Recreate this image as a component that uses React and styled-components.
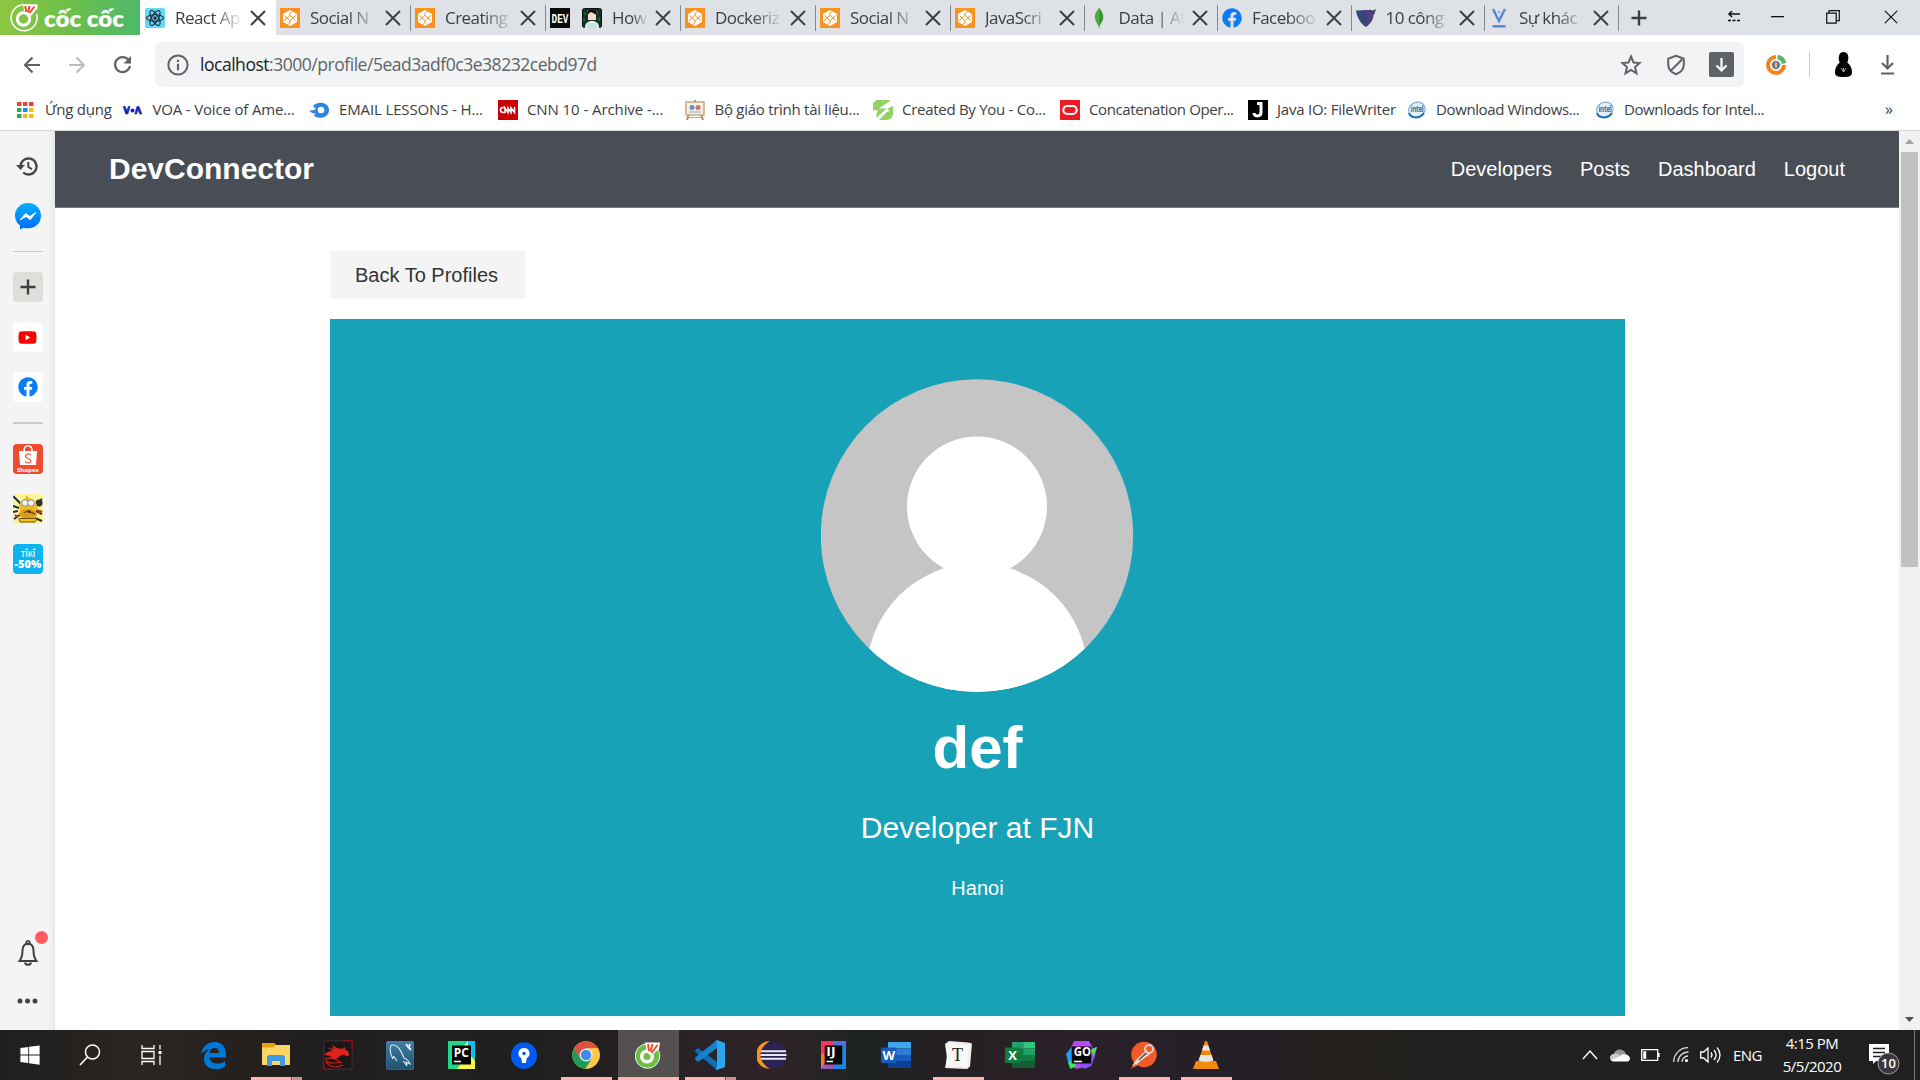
import React from "react";
import styled, { createGlobalStyle } from "styled-components";
import { FaWindows, FaYoutube, FaFacebook } from "react-icons/fa";

const UI = `"Segoe UI", "Open Sans", "Noto Sans", sans-serif`;
const ARIAL = `Arial, "Liberation Sans", sans-serif`;

const Global = createGlobalStyle`
  * { box-sizing: border-box; }
  html, body { margin: 0; padding: 0; }
  body { width: 1920px; height: 1080px; overflow: hidden; background: #fff; }
  svg { display: block; flex: none; }
`;

const Screen = styled.div`
  width: 1920px;
  height: 1080px;
  display: flex;
  flex-direction: column;
  overflow: hidden;
  font-family: ${UI};
`;

/* ---------- tab strip ---------- */
const TabStrip = styled.div`
  height: 35px;
  flex: none;
  display: flex;
  background: #dee1e6;
`;
const Brand = styled.div`
  width: 140px;
  flex: none;
  background: linear-gradient(90deg, #8dc63f, #6dbf4b 50%, #4cb96b);
`;
const Tab = styled.div`
  width: ${(p) => p.$w}px;
  flex: none;
  display: flex;
  align-items: center;
  padding-left: ${(p) => (p.$active ? 5 : 4)}px;
  background: ${(p) => (p.$active ? "#fff" : "transparent")};
`;
const TabTitle = styled.div`
  flex: 1;
  min-width: 0;
  margin-left: 10px;
  white-space: nowrap;
  font-size: 17px;
  line-height: 26px;
  letter-spacing: -0.55px;
  color: #3c4043;
  -webkit-mask-image: linear-gradient(90deg, #000 55%, transparent 100%);
  mask-image: linear-gradient(90deg, #000 55%, transparent 100%);
`;
const TabClose = styled.div`
  margin: 0 9px 0 7px;
`;
const TabLine = styled.div`
  width: 1px;
  height: 26px;
  background: ${(p) => (p.$hide ? "transparent" : "#85888d")};
`;
const NewTab = styled.div`
  width: 40px;
  display: flex;
  align-items: center;
  justify-content: center;
`;
const WindowButtons = styled.div`
  margin-left: auto;
  display: flex;
  align-items: center;
  padding-right: 22px;
`;
const WinBtn = styled.div`
  width: ${(p) => p.$w}px;
  display: flex;
  justify-content: flex-end;
  padding-bottom: 2px;
`;

/* ---------- toolbar ---------- */
const Toolbar = styled.div`
  height: 52px;
  flex: none;
  display: flex;
  align-items: center;
  padding: 7px 0 0 9px;
`;
const NavBtn = styled.div`
  width: 45px;
  display: flex;
  justify-content: center;
`;
const AddressBar = styled.div`
  width: 1589px;
  height: 45px;
  margin-left: 11px;
  display: flex;
  align-items: center;
  padding: 0 10px 0 12px;
  border-radius: 6px;
  background: #f1f3f4;
`;
const Url = styled.div`
  margin: -1px 0 0 11px;
  font-size: 17.5px;
  letter-spacing: -0.47px;
  color: #5f6368;
  white-space: nowrap;
  b { font-weight: 400; color: #202124; }
`;
const AddressIcons = styled.div`
  margin-left: auto;
  display: flex;
  align-items: center;
  gap: 22px;
  & > :first-child { margin-right: 1px; }
`;
const Extensions = styled.div`
  flex: 1;
  display: flex;
  align-items: center;
  padding-left: 21px;
`;
const ToolbarLine = styled.div`
  width: 1px;
  height: 25px;
  margin: 0 25px 0 22px;
  background: #c9cbce;
`;
const ToolbarGap = styled.div`
  width: 28px;
`;
const DownloadBox = styled.div`
  width: 25px;
  height: 25px;
  display: grid;
  place-items: center;
  border-radius: 2px;
  background: #5f6368;
`;

/* ---------- bookmarks ---------- */
const Bookmarks = styled.div`
  height: 44px;
  flex: none;
  display: flex;
  align-items: center;
  padding: 2px 0 0 15px;
  border-bottom: 1px solid #d5d7da;
`;
const Bookmark = styled.div`
  width: ${(p) => p.$w}px;
  flex: none;
  display: flex;
  align-items: center;
  gap: ${(p) => p.$gap}px;
  font-size: 15px;
  letter-spacing: ${(p) => p.$ls}px;
  color: #3c4043;
  white-space: nowrap;
`;
const MarkTitle = styled.span`
  padding-bottom: 2px;
`;
const MoreMarks = styled.div`
  margin-left: auto;
  padding: 0 27px 2px 0;
  font-size: 16px;
  color: #3c4043;
`;

/* ---------- body ---------- */
const Body = styled.div`
  height: 899px;
  flex: none;
  display: flex;
`;
const Sidebar = styled.div`
  width: 55px;
  flex: none;
  display: flex;
  flex-direction: column;
  align-items: center;
  padding: 20px 0 26px;
  background: linear-gradient(90deg, #f4f4f4 47px, #f0f0f0 52px, #e4e4e4 55px);
`;
const SideItem = styled.div`
  width: 30px;
  height: 30px;
  flex: none;
  display: grid;
  place-items: center;
  margin-bottom: 20px;
  border-radius: 4px;
  overflow: hidden;
  background: ${(p) => p.$bg || "transparent"};
`;
const SideLine = styled.div`
  width: 30px;
  height: ${(p) => p.$h}px;
  flex: none;
  margin-bottom: 20px;
  background: #cdcdcd;
`;
const SideBottom = styled.div`
  margin-top: auto;
  display: flex;
  flex-direction: column;
  align-items: center;
  gap: 32px;
`;
const BellWrap = styled.div`
  position: relative;
`;
const BellDot = styled.div`
  position: absolute;
  right: -10px;
  top: -9px;
  width: 13px;
  height: 13px;
  border-radius: 50%;
  background: #ff5a5f;
`;
const Page = styled.div`
  flex: 1;
  display: flex;
  flex-direction: column;
  font-family: ${ARIAL};
  background: #fff;
`;
const SiteNav = styled.div`
  height: 77px;
  flex: none;
  display: flex;
  align-items: center;
  justify-content: space-between;
  padding: 0 54px 1px;
  background: #494d55;
  border-bottom: 1px solid #17a2b8;
  color: #fff;
`;
const SiteName = styled.div`
  font-size: 30px;
  font-weight: 700;
`;
const SiteLinks = styled.div`
  display: flex;
  gap: 28px;
  padding-top: 2px;
  font-size: 20px;
`;
const Content = styled.div`
  width: 1295px;
  margin-left: 275px;
  padding-top: 43px;
`;
const BackButton = styled.div`
  display: inline-flex;
  align-items: center;
  height: 48px;
  width: 195px;
  padding: 0 0 0 25px;
  font-size: 20px;
  white-space: nowrap;
  color: #333;
  background: #f4f4f4;
`;
const ProfileCard = styled.div`
  height: 697px;
  margin-top: 20px;
  padding-top: 60px;
  display: flex;
  flex-direction: column;
  align-items: center;
  background: #18a2b8;
  color: #fff;
`;
const Name = styled.div`
  margin-top: 20px;
  font-size: 60px;
  line-height: 72px;
  font-weight: 700;
`;
const Role = styled.div`
  margin-top: 26px;
  font-size: 30px;
  line-height: 36px;
`;
const Place = styled.div`
  margin-top: 27px;
  font-size: 20px;
  line-height: 30px;
`;
const Scrollbar = styled.div`
  width: 21px;
  flex: none;
  display: flex;
  flex-direction: column;
  align-items: center;
  background: #f1f1f1;
`;
const ScrollArrow = styled.div`
  height: 21px;
  display: flex;
  align-items: center;
`;
const ScrollThumb = styled.div`
  width: 17px;
  height: 415px;
  margin-bottom: auto;
  background: #c1c1c1;
`;

/* ---------- taskbar ---------- */
const Taskbar = styled.div`
  height: 50px;
  flex: none;
  display: flex;
  background: linear-gradient(90deg, #1f1f1f 0, #2b2520 150px, #211e1e 300px, #201f1f 540px, #2a2226 700px, #2d2328 780px, #1f2323 860px, #262023 960px, #2a2128 1080px, #251f28 1240px, #25221e 1340px, #212020 1480px, #212020 100%);
`;
const TaskCell = styled.div`
  width: ${(p) => p.$w || 61}px;
  flex: none;
  display: flex;
  flex-direction: column;
  align-items: center;
  justify-content: flex-end;
  margin-right: ${(p) => (p.$w ? 0 : 1)}px;
  background: ${(p) => (p.$active ? "#53504f" : "transparent")};
`;
const TaskIcon = styled.div`
  height: 47px;
  display: grid;
  place-items: center;
  padding: 3px 2px 0 0;
`;
const Underline = styled.div`
  width: ${(p) => (p.$full ? 61 : 51)}px;
  height: 3px;
  background: ${(p) =>
    p.$kind === "none" ? "transparent" : p.$kind === "multi" ? "linear-gradient(90deg, #ffb3b3 40px, #6d5454 40px, #6d5454 41px, #d08f90 41px)" : "#ffb3b3"};
`;
const Tray = styled.div`
  margin-left: auto;
  display: flex;
  align-items: center;
  color: #fff;
  font-size: 15px;
`;
const TrayIcon = styled.div`
  margin-right: ${(p) => p.$gap}px;
`;
const Lang = styled.div`
  width: 30px;
  letter-spacing: -0.6px;
`;
const Clock = styled.div`
  width: 82px;
  margin-left: 8px;
  text-align: center;
  line-height: 23px;
  letter-spacing: -0.5px;
  white-space: nowrap;
`;
const Notice = styled.div`
  margin-left: 16px;
  padding-top: 7px;
`;
const DesktopEdge = styled.div`
  width: 6px;
  height: 50px;
  margin-left: 14px;
  border-left: 1px solid #77777a;
`;

/* ---------- drawings ---------- */
const T = ({ children, ...p }) => (
  <text textAnchor="middle" fontFamily="Open Sans, sans-serif" fontWeight="700" {...p}>{children}</text>
);

const CocCoc = () => (
  <svg width="140" height="35" viewBox="0 0 140 35">
    <path d="M23.500 4.800A13 13 0 1 0 36.500 14" fill="none" stroke="#fff" strokeWidth="1.500" />
    <circle cx="23.500" cy="19" r="6.200" fill="none" stroke="#fff" strokeWidth="3" />
    <path d="M23 4.200h14.500v4L31 16l-4.500-3.500L24 12z" fill="#fff" />
    <path d="M25.200 6l1.200 6M29.500 6l-1.300 6.500M34.500 6.500l-5 6.500" stroke="#ef4a2d" strokeWidth="2" />
    <text x="44" y="27" textLength="80" lengthAdjust="spacingAndGlyphs" fontFamily="Lato, Open Sans, sans-serif" fontWeight="800" fontSize="22" fill="#fff">cốc cốc</text>
  </svg>
);
const ReactIcon = () => (
  <svg width="20" height="20" viewBox="0 0 20 20">
    <rect width="20" height="20" rx="2" fill="#61dafb" />
    <g fill="none" stroke="#20232a" strokeWidth="1.100">
      <ellipse cx="10" cy="10" rx="8.500" ry="3.300" />
      <ellipse cx="10" cy="10" rx="8.500" ry="3.300" transform="rotate(60 10 10)" />
      <ellipse cx="10" cy="10" rx="8.500" ry="3.300" transform="rotate(120 10 10)" />
    </g>
    <circle cx="10" cy="10" r="1.700" fill="#20232a" />
  </svg>
);
const OrangeIcon = () => (
  <svg width="20" height="20" viewBox="0 0 20 20">
    <rect width="20" height="20" fill="#f7931e" />
    <path d="M10 2l7 4v8l-7 4-7-4V6z" fill="#fff" />
    <g fill="none" stroke="#f7931e" strokeWidth="1">
      <path d="M10 7.200l2.800 2.800-2.800 2.800L7.200 10z" />
      <path d="M7.200 10L4.500 7.500M10 7.200c-.5-2 .5-3 2.500-3.500M12.800 10l3.500-3M12.800 10l2.700 2.500M10 12.800c.5 2-.5 3-2.500 3.500M7.200 10l-3.500 3" />
    </g>
  </svg>
);
const DevIcon = () => (
  <svg width="52" height="20" viewBox="0 0 52 20">
    <rect width="20" height="20" fill="#0a0a0a" />
    <text x="1.500" y="14.500" textLength="17" lengthAdjust="spacingAndGlyphs" fontFamily="Liberation Mono, monospace" fontWeight="700" fontSize="12.500" fill="#fff">DEV</text>
    <rect x="32.500" y=".500" width="19" height="19" rx="2" fill="#153322" stroke="#0a140e" />
    <path d="M35 4v3M38 2v3M47 3v4M49 9v4M34 10v3" stroke="#3a7d4d" strokeWidth="1" />
    <path d="M38 7c0-6 8-6 8 0v5h-8z" fill="#f7dccb" />
    <path d="M37 7c0-7 10-7 10 0l-2-1-4-2-3 2z" fill="#111" />
    <path d="M35 20c0-5 3-7 7-7s7 2 7 7z" fill="#f4f7f8" />
    <rect x="37" y="15" width="10" height="5" fill="#c5e6da" />
  </svg>
);
const LeafIcon = () => (
  <svg width="20" height="20" viewBox="0 0 20 20">
    <path d="M10 0c5 6 6 10 .6 17.500L10.400 20h-.8l-.2-2.500C4 10 5 6 10 0z" fill="#4faa3f" />
    <path d="M10 0c5 6 6 10 .6 17.500L10 18z" fill="#3d9636" />
  </svg>
);
const FbIcon = ({ s = 20 }) => <FaFacebook size={s} color="#0b7cf5" />;
const FoxIcon = () => (
  <svg width="20" height="20" viewBox="0 0 20 20">
    <path d="M0 2.500L11 2c3 0 5 0 6 2 1 6-2 11-7 15C5 16 1 10 0 2.500z" fill="#36487a" />
    <path d="M8 2.200l5-.2c3 0 4 .5 4.500 2.500.7 5.500-2 10-6.500 13.500 1-5 0-11-3-15.800z" fill="#50417c" />
    <path d="M13 1l3 2 4-2-2 6z" fill="#3b3a6e" />
  </svg>
);
const ViblioIcon = () => (
  <svg width="20" height="20" viewBox="0 0 20 20">
    <path d="M4 1l6 12L16 1M3.500 18.200h13" fill="none" stroke="#5488d2" strokeWidth="2.400" />
    <circle cx="10" cy="4" r="1.600" fill="#8fb4e6" />
  </svg>
);
const CloseX = ({ s = 16, w = 2, c = "#3c4043" }) => (
  <svg width={s} height={s} viewBox="0 0 16 16"><path d="M1 1l14 14M15 1L1 15" stroke={c} strokeWidth={w} /></svg>
);
const BackArrow = ({ flip, c }) => (
  <svg width="16" height="18" viewBox="0 0 16 18">
    <path d={flip ? "M0 9h14M7.500 1.500L15 9l-7.500 7.500" : "M16 9H2M8.500 1.500L1 9l7.500 7.500"} fill="none" stroke={c} strokeWidth="2.200" />
  </svg>
);
const Reload = () => (
  <svg width="19" height="19" viewBox="-1 0 19 19">
    <path d="M15.500 5A7.500 7.500 0 1 0 17 11" fill="none" stroke="#5f6368" strokeWidth="2.300" />
    <path d="M18 1v7.500h-7.500z" fill="#5f6368" />
  </svg>
);
const Info = () => (
  <svg width="22" height="22" viewBox="0 0 22 22">
    <circle cx="11" cy="11" r="9.600" fill="none" stroke="#5f6368" strokeWidth="2" />
    <path d="M11 9.700v6.500M11 5.800v2.300" stroke="#5f6368" strokeWidth="2.200" />
  </svg>
);
const Star = () => (
  <svg width="22" height="22" viewBox="0 0 22 22">
    <path d="M11 2.500l2.500 6 6.200.5-4.700 4.100 1.500 6.200L11 16l-5.500 3.300L7 13.100 2.300 9l6.200-.5z" fill="none" stroke="#5f6368" strokeWidth="2" />
  </svg>
);
const Shield = () => (
  <svg width="22" height="22" viewBox="0 0 22 22">
    <path d="M11 1.800l7.800 3v6c0 4.500-3.200 7.700-7.800 9.500-4.600-1.800-7.800-5-7.800-9.500v-6zM5 17.500L17 5.500" fill="none" stroke="#5f6368" strokeWidth="2" />
  </svg>
);
const Down = ({ c, bar }) => (
  <svg width="15" height="20" viewBox="0 0 15 20">
    <path d={bar ? "M7.500 0v13M2 8l5.500 5.500L13 8M1 18.500h13" : "M7.500 3v12M2.500 10.500l5 5 5-5"} fill="none" stroke={c} strokeWidth="2.200" />
  </svg>
);
const Ring = () => (
  <svg width="22" height="22" viewBox="0 0 22 22">
    <path d="M11 3a8 8 0 1 0 8 8" fill="none" stroke="#f58220" strokeWidth="4" />
    <path d="M12.500 3a8 8 0 0 1 6.500 6.500" fill="none" stroke="#5cb560" strokeWidth="4.600" />
    <circle cx="11" cy="11" r="4.200" fill="#777" />
    <path d="M11 8.500v5" stroke="#ddd" strokeWidth="1.500" />
  </svg>
);
const Person = () => (
  <svg width="17" height="25" viewBox="0 0 17 25">
    <path d="M8.500 0C12 0 14 3 13.200 7.500 13 9 12.700 9.500 12.300 10.500 15 12.500 17 16 17 20c0 4-2 5-8.500 5S0 24 0 20c0-4 2-7.500 4.700-9.500C3.500 8 3.600 6 4 4 4.400 1.500 6 0 8.500 0z" fill="#050505" />
    <path d="M6 16l2.500 4 2.500-4M8.500 16v4" fill="none" stroke="#bbb" strokeWidth=".9" />
  </svg>
);
const Apps = () => (
  <svg width="20" height="20" viewBox="0 0 20 20">
    {[0, 1, 2].map((r) => [0, 1, 2].map((c) => (
      <rect key={r + "" + c} x={2 + c * 6} y={2 + r * 6} width="4.500" height="4" fill={[["#ea4335", "#ea4335", "#ea4335"], ["#34a853", "#1a86f0", "#fbb905"], ["#34a853", "#fbb905", "#fbb905"]][r][c]} />
    )))}
  </svg>
);
const Voa = () => (
  <svg width="21" height="20" viewBox="0 0 21 20">
    <path d="M1.200 6.500h2L5 11l1.300-4.500h1.800l-2.300 7.500H3.800zM12.800 14l2.200-7.500h2L19.800 14h-2L16 9.500 14.500 14z" fill="#1626b4" stroke="#1626b4" strokeWidth=".7" />
    <circle cx="10.500" cy="10.500" r="2" fill="#1626b4" />
  </svg>
);
const Mail = () => (
  <svg width="21" height="20" viewBox="0 0 21 20">
    <path d="M4 6C7 1 20 1 20 10c0 8-10 10-15.500 5.500L7 14C4 13.500 1.500 12.500 0 10.500 3 10.500 5 10 7 9z" fill="#2c85de" />
    <circle cx="12" cy="10" r="3.300" fill="#fff" />
  </svg>
);
const Cnn = () => (
  <svg width="20" height="20" viewBox="0 0 20 20">
    <rect width="20" height="20" fill="#cc0000" />
    <path d="M7 7.500H5a2 2 0 0 0 0 5h2V8l3 4.500V8l3 4.500V8l3.500 4.500V7" fill="none" stroke="#fff" strokeWidth="1.500" />
  </svg>
);
const Board = () => (
  <svg width="20" height="20" viewBox="0 0 20 20">
    <path d="M4 14l-2 6M16 14l2 6M10 0v2" stroke="#b28a5b" strokeWidth="2" />
    <rect x="1" y="2" width="18" height="13" fill="#f5f0e8" stroke="#c9a77e" strokeWidth="1.500" />
    <circle cx="7" cy="7.500" r="2.500" fill="#6a8fc8" /><circle cx="13" cy="7.500" r="2.500" fill="#d66e78" />
    <path d="M4 12h12" stroke="#9aa5b8" />
    <path d="M4 17.500h12" stroke="#c9a77e" />
  </svg>
);
const Sgreen = () => (
  <svg width="20" height="20" viewBox="0 0 20 20">
    <path d="M0 3.500L4.500 0H20v1L7 9.500h9L4 20v-5l2-3.500H0z" fill="#93d162" transform="scale(.85 .9)" />
    <path d="M20 6v7c0 4-2 7-7 7H6l8-8 3-1-3-2z" fill="#93d162" />
  </svg>
);
const Oracle = () => (
  <svg width="20" height="20" viewBox="0 0 20 20">
    <rect width="20" height="20" fill="#ec1c24" /><rect x="3.300" y="6" width="13.400" height="8" rx="4" fill="none" stroke="#fff" strokeWidth="2" />
  </svg>
);
const JIcon = () => (
  <svg width="20" height="20" viewBox="0 0 20 20">
    <rect width="20" height="20" fill="#000" />
    <path d="M9 3.500h5.500M13 3v9.500c0 4.500-7 4.500-7 .5" fill="none" stroke="#fff" strokeWidth="3" />
  </svg>
);
const Intel = () => (
  <svg width="20" height="20" viewBox="0 0 20 20">
    <ellipse cx="10" cy="9.500" rx="8.500" ry="7.200" fill="#e3f0f8" stroke="#7cb6dc" strokeWidth="1.200" transform="rotate(-25 10 10)" />
    <path d="M2 13c2 6 11 6 15 0" fill="none" stroke="#1d6fb0" strokeWidth="2" />
    <text x="3.500" y="12" textLength="13" lengthAdjust="spacingAndGlyphs" fontFamily="Open Sans, sans-serif" fontWeight="700" fontSize="8" fill="#2676b5">intel</text>
  </svg>
);
const History = () => (
  <svg width="23" height="22" viewBox="0 0 23 22">
    <path d="M4.500 11.500a8 8 0 1 1 2.700 6" fill="none" stroke="#454545" strokeWidth="2.300" />
    <path d="M0 10h9l-4.500 5z" fill="#454545" />
    <path d="M12.300 7v5l3.700 2.200" fill="none" stroke="#454545" strokeWidth="2" />
  </svg>
);
const Messenger = () => (
  <svg width="26" height="27" viewBox="0 0 26 27">
    <defs><linearGradient id="ms" x1="0" y1="0" x2="0" y2="1"><stop offset="0" stopColor="#00b2ff" /><stop offset="1" stopColor="#006aff" /></linearGradient></defs>
    <path d="M13 0c7.300 0 13 5.500 13 12.700S20.300 25.300 13 25.300c-1.500 0-3-.2-4.300-.6L5 26.500v-4C2 20.200 0 16.800 0 12.700 0 5.500 5.700 0 13 0z" fill="url(#ms)" />
    <path d="M5.200 16.800l5.600-6.300 4 3 6-3.900-5.500 6.900-4.200-3.100z" fill="#fff" stroke="#fff" />
  </svg>
);
const Plus = ({ s = 16, w = 2.4 }) => (
  <svg width={s} height={s} viewBox="0 0 16 16"><path d="M8 .5v15M.5 8h15" stroke="#3c4043" strokeWidth={w} /></svg>
);
const Shopee = () => (
  <svg width="30" height="30" viewBox="0 0 30 30">
    <rect width="30" height="30" fill="#ee4d2d" />
    <path d="M6 7h18l-1 14H7z" fill="#fff" /><path d="M11 7c0-7 8-7 8 0" fill="none" stroke="#fff" strokeWidth="1.600" />
    <path d="M18 11c-2-2-6-1-5.500 1.500S18 14.500 18 17s-4 2.500-6 .5" fill="none" stroke="#ee6d50" strokeWidth="1.300" />
    <T x="15" y="27.500" fontSize="6" fill="#fff">Shopee</T>
  </svg>
);
const Chicken = () => (
  <svg width="30" height="30" viewBox="0 0 30 30">
    <rect width="30" height="30" fill="#fbf59a" />
    <path d="M0 2l9 9M0 12l6 2M29 5l-6 5M29 20l-6-3M1 25l7-5M0 18l5-1M22 24l7 3" stroke="#2a2a38" strokeWidth="2" />
    <circle cx="26" cy="9" r="3.500" fill="#30303f" />
    <path d="M23 15l7 2-4 3zM1 20l5 2-3 2z" fill="#b03a30" />
    <path d="M14 1l2 5h-4z" fill="#d99a12" />
    <ellipse cx="15" cy="13" rx="9" ry="9" fill="#f2bd22" /><ellipse cx="15" cy="20" rx="9" ry="5" fill="#dba017" />
    <circle cx="12" cy="9" r="3.300" fill="#f5f5f0" stroke="#8f8f96" /><circle cx="18" cy="9" r="3.300" fill="#f5f5f0" stroke="#8f8f96" />
    <path d="M11 19c2-2 4-2 6-1l5 2" stroke="#7a4a10" strokeWidth="1.400" fill="none" />
    <circle cx="16" cy="17.500" r="1.500" fill="#4a2f2a" />
    <path d="M6 24.500h18l-2 3.500H7z" fill="#f2c51c" stroke="#6d5510" />
  </svg>
);
const Tiki = () => (
  <svg width="30" height="30" viewBox="0 0 30 30">
    <rect width="30" height="30" rx="3" fill="#0db5ef" />
    <T x="15" y="12.500" fontSize="8" fill="#fff" fontWeight="600">TÎKÎ</T>
    <T x="15" y="24" fontSize="11" fill="#fff" fontWeight="800">-50%</T>
  </svg>
);
const Bell = () => (
  <svg width="20" height="26" viewBox="0 0 20 26">
    <path d="M10 3.500c4 .5 5.500 3.500 5.500 7 0 4.500 1 8 3 10.500h-17c2-2.500 3-6 3-10.500 0-3.500 1.500-6.500 5.500-7z" fill="none" stroke="#3f3f3f" strokeWidth="2" />
    <circle cx="10" cy="2.600" r="1.800" fill="none" stroke="#3f3f3f" strokeWidth="1.600" />
    <path d="M7 22.500c.5 3 5.500 3 6 0" fill="none" stroke="#3f3f3f" strokeWidth="2" />
  </svg>
);
const Dots = () => (
  <svg width="21" height="6" viewBox="0 0 21 6"><g fill="#444"><circle cx="3" cy="3" r="2.500" /><circle cx="10.500" cy="3" r="2.500" /><circle cx="18" cy="3" r="2.500" /></g></svg>
);
const Avatar = () => (
  <svg width="313" height="313" viewBox="0 0 313 313">
    <defs><clipPath id="av"><circle cx="156" cy="156.500" r="156.200" /></clipPath></defs>
    <g clipPath="url(#av)">
      <rect width="313" height="313" fill="#c5c5c5" />
      <circle cx="156" cy="127.500" r="70" fill="#fff" />
      <path d="M122 189.500C92 200 65 230 47 272V313H265V272C247 230 220 200 190 189.500z" fill="#fff" />
      <circle cx="156" cy="295" r="110.500" fill="#fff" />
    </g>
  </svg>
);
const SearchIcon = () => (
  <svg width="22" height="22" viewBox="0 0 22 22"><circle cx="13.500" cy="8" r="7" fill="none" stroke="#fff" strokeWidth="1.500" /><path d="M8.500 13L1 21" stroke="#fff" strokeWidth="1.600" /></svg>
);
const TaskView = () => (
  <svg width="21" height="20" viewBox="0 0 21 20">
    <path d="M1 0v3.500h12V0M1 20v-3.500h12V20M1 6.500h12v7H1zM19 0v4.500M19 10.500V20" fill="none" stroke="#fff" strokeWidth="1.300" /><rect x="17.500" y="6" width="3" height="3" fill="#fff" />
  </svg>
);
const Edge = () => (
  <svg width="26" height="27" viewBox="0 0 26 27">
    <path d="M0 12.500C1 5 6 0 13.500 0 21 0 25 5.500 25 12v3.500H8.500c.3 4 3.500 6 7.500 6 3 0 5.500-.8 8-2.300v5.500c-2.500 1.500-5.500 2.300-9.500 2.300C7 27 3 22.500 3 17c0-4.500 2.500-8 6-10C5 7 2 9.500 0 12.500zM8.500 11H18c0-3-1.500-5-4.500-5S9 8 8.500 11z" fill="#0078d7" />
  </svg>
);
const Folder = () => (
  <svg width="28" height="24" viewBox="0 0 28 24">
    <path d="M0 0h12l2 2h14v20H0z" fill="#ffd664" /><path d="M0 0h12l1.500 2-2 2.500H0z" fill="#e3a20b" />
    <path d="M5 23v-9.500L7 12h14l2 1.500V23h-5v-5h-8v5z" fill="#3d9be4" />
  </svg>
);
const Dragon = () => (
  <svg width="30" height="30" viewBox="0 0 30 30">
    <rect x=".7" y=".7" width="28.600" height="28.600" rx="3" fill="#1a1717" stroke="#38292b" strokeWidth="1.400" />
    <path d="M20 .7h8.500l.8 1V9M.7 22v6l1 1.300H9" fill="none" stroke="#8c0d17" strokeWidth="1.600" />
    <path d="M1 15c3-3 5-4 9-4l-5-3 6 1-2-4 5 3 5 1 3-2v3l3 1 1 4-1 1.500-5-2-3 1.500-4 3-8-.5 4-2.500z" fill="#e2231a" />
    <path d="M2 19c5-3 13 1 17 4M3 22c3 5 11 6 17 3M3 20c0 3 8 4 14 2" stroke="#d11f1a" strokeWidth="1.100" fill="none" />
  </svg>
);
const MySql = () => (
  <svg width="28" height="29" viewBox="0 0 28 29">
    <defs><linearGradient id="my" x1="0" y1="0" x2="0" y2="1"><stop offset="0" stopColor="#3d7fa6" /><stop offset="1" stopColor="#1f5070" /></linearGradient></defs>
    <rect width="28" height="29" rx="3" fill="url(#my)" stroke="#4b8bb0" strokeWidth=".6" />
    <path d="M7 18C4 13 3 5 6 4c6-.5 9 6 12 13 3 1 5 3 6 6l-4-2 1 4-4-5M7 18c0-3 1-3 2-1l2 3" fill="none" stroke="#dfeaf1" strokeWidth="1.100" />
    <path d="M20 3l2 3 3 3M24 3l-1 3" stroke="#eef4f7" strokeWidth="1.800" />
  </svg>
);
const JetFrame = ({ label, w, children, box = 4 }) => (
  <svg width={w} height="28" viewBox="0 0 27 28" preserveAspectRatio="none">
    {children}
    <rect x={box} y={box + 0.5} width={27 - box * 2} height={27 - box * 2} fill="#070707" />
    <text x={box + 1.8} y="15.500" textLength={label === "IJ" ? 10 : 15} lengthAdjust="spacingAndGlyphs" fontFamily="Open Sans, sans-serif" fontWeight="700" fontSize="12" fill="#fff">{label}</text>
    <path d={`M${box + 2} 20.500h7`} stroke="#fff" strokeWidth="1.500" />
  </svg>
);
const PyCharm = () => (
  <JetFrame label="PC" w={27}>
    <path d="M0 0h27v28H0z" fill="#21d789" /><path d="M17 0h10v16l-8 3z" fill="#07c3f2" /><path d="M20 0l-5 6 12 14V28H9L20 12z" fill="#fcf84a" /><path d="M20 0h7v15l-4-9z" fill="#0fc0ea" />
  </JetFrame>
);
const IntelliJ = () => (
  <JetFrame label="IJ" w={25}>
    <path d="M0 0h27v28H0z" fill="#4f6fe3" /><path d="M0 0h15L9 9l-6 10H0z" fill="#fe315d" /><path d="M0 12l8 4 4 12H0z" fill="#f07c2e" /><path d="M5 20h12l-3 8H0z" fill="#9b55b5" /><path d="M20 5h7v23H14z" fill="#1c86e6" />
  </JetFrame>
);
const GoLand = () => (
  <JetFrame label="GO" w={31} box={5}>
    <path d="M7 0h13l3 6-4 18H6L4 8z" fill="#b74af7" /><path d="M0 13l5-7 4 19-6 1z" fill="#1ea0f2" /><path d="M4 24h10l2 2-7 2z" fill="#b74af7" /><path d="M21 8l6-2-2 10-3 9-6 3-4-4z" fill="#8a50ef" /><path d="M21 9l6-3-3 9zM2 22l4-4 3 7-5 3z" fill="#3bea62" />
  </JetFrame>
);
const BlueKey = () => (
  <svg width="26" height="27" viewBox="0 0 26 27"><ellipse cx="13" cy="13.500" rx="13" ry="13.300" fill="#005af0" /><path d="M13 6a5.500 5.500 0 0 0-2.700 10.300L11 21h4l.7-4.700A5.500 5.500 0 0 0 13 6z" fill="#fff" /><circle cx="13" cy="11.500" r="1.800" fill="#005af0" /></svg>
);
const Chrome = () => (
  <svg width="28" height="28" viewBox="0 0 28 28">
    <circle cx="14" cy="14" r="13.700" fill="#fbc84a" />
    <path d="M2.100 7.200A13.700 13.700 0 0 1 25.900 7.200L14 7.500 8 17.500z" fill="#dd4f40" />
    <path d="M2.100 7.200A13.700 13.700 0 0 0 13.500 27.700L20 17.500 8 17.500z" fill="#1c9e5a" />
    <path d="M25.900 7.200H14l6 10.300-6.500 10.200A13.700 13.700 0 0 0 25.900 7.200z" fill="#fbc84a" />
    <circle cx="14" cy="14" r="6.500" fill="#f1f1f1" /><circle cx="14" cy="14" r="5.200" fill="#4688f1" />
  </svg>
);
const CocApp = () => (
  <svg width="26" height="28" viewBox="0 0 26 28">
    <circle cx="12.500" cy="15" r="12.300" fill="#6cbd45" stroke="#eef5ea" strokeWidth="1" />
    <circle cx="12" cy="15.500" r="5.300" fill="none" stroke="#fff" strokeWidth="3.500" />
    <path d="M10 1.500h15L24 8l-8 7-4-4z" fill="#fff" /><path d="M13 3l1 7M17.500 3l-2 7.500M22.500 4l-6 8" stroke="#f0502f" strokeWidth="2" />
  </svg>
);
const Vs = () => (
  <svg width="30" height="30" viewBox="0 0 30 30">
    <path d="M0 10.500L3 8l19 14v8L.3 12z" fill="#0f6fb5" />
    <path d="M0 19l3 3L22 8V0L.3 17.500z" fill="#1483cf" />
    <path d="M22 0l8 3v24l-8 3-1.500-1L22 27V3l-1.500-2z" fill="#2aa5ee" />
  </svg>
);
const Eclipse = () => (
  <svg width="30" height="28" viewBox="0 0 30 28">
    <path d="M13 0A14 14 0 0 0 13 28 16 16 0 0 1 13 0z" fill="#f7941e" /><circle cx="16.500" cy="14" r="13" fill="#2c2255" />
    <path d="M4 10.300h25M3.500 14h26M4 17.700h25" stroke="#e9e8f1" strokeWidth="2" />
  </svg>
);
const Office = ({ label, c }) => (
  <svg width="30" height="26" viewBox="0 0 30 26">
    <path d="M7 0h23v6.500H7z" fill={c[0]} /><path d="M7 6.500h23V13H7z" fill={c[1]} /><path d="M7 13h23v6.500H7z" fill={c[2]} /><path d="M7 19.500h23V26H7z" fill={c[3]} />
    {label === "X" && <path d="M7 0h11.500v6.500H7zM18.500 6.500H30V13H18.500z" fill="#21a366" />}
    <rect y="5.500" width="15.500" height="15.500" rx="1" fill={c[4]} />
    <T x="7.700" y="17.800" fontSize="13" fill="#fff">{label}</T>
  </svg>
);
const Typora = () => (
  <svg width="28" height="28" viewBox="0 0 28 28">
    <path d="M5 0l19 1.500 4 1-2 23-3 2.500-22-1 2-10L1 3z" fill="#eee" /><path d="M4 2l21 2-1 22-22-1z" fill="#f8f8f8" />
    <text x="13.500" y="20" textAnchor="middle" fontFamily="Liberation Serif, serif" fontSize="18" fill="#222">T</text>
  </svg>
);
const Postman = () => (
  <svg width="27" height="28" viewBox="0 0 27 28">
    <circle cx="14" cy="13.500" r="12.800" fill="#f15a24" />
    <circle cx="19" cy="8" r="4" fill="#f15a24" stroke="#d8d0cb" strokeWidth="2" />
    <path d="M17 10L7 19l-4 6M20 12L9 20l-5 5" fill="none" stroke="#e8ddd6" strokeWidth="1.800" /><path d="M16 12l-7 7" stroke="#5b4a42" strokeWidth="1.200" />
    <path d="M0 28l5-5 2 2z" fill="#f15a24" />
  </svg>
);
const Vlc = () => (
  <svg width="26" height="28" viewBox="0 0 26 28">
    <path d="M3 20h20l3 8H0z" fill="#f28a0d" /><path d="M12 0h2l7 22c-3 3-13 3-16 0z" fill="#f28a0d" />
    <path d="M10.700 4.500h4.600l1.700 5H9zM7.300 14h11.400l1.700 5.200c-4 2-10.800 2-14.800 0z" fill="#e6e6e6" />
  </svg>
);

/* ---------- data ---------- */
const tabs = [
  ["React Ap", <ReactIcon />, 136], ["Social N", <OrangeIcon />, 135], ["Creating", <OrangeIcon />, 135], ["How", <DevIcon />, 135],
  ["Dockeriz", <OrangeIcon />, 135], ["Social N", <OrangeIcon />, 135], ["JavaScri", <OrangeIcon />, 133.5], ["Data | At", <LeafIcon />, 133.5],
  ["Faceboo", <FbIcon />, 133.5], ["10 công", <FoxIcon />, 133.5], ["Sự khác", <ViblioIcon />, 133.5],
];
const marks = [
  ["Ứng dụng", <Apps />, 107, -0.25, 10], ["VOA - Voice of Ame...", <Voa />, 187, -0.17, 9.5], ["EMAIL LESSONS - H...", <Mail />, 189, -0.13, 9],
  ["CNN 10 - Archive -...", <Cnn />, 187, -0.08, 9], ["Bộ giáo trình tài liệu...", <Board />, 188, -0.27, 9.5], ["Created By You - Co...", <Sgreen />, 187, -0.28, 9],
  ["Concatenation Oper...", <Oracle />, 188, -0.4, 9], ["Java IO: FileWriter", <JIcon />, 159, -0.23, 9], ["Download Windows...", <Intel />, 188, -0.38, 9], ["Downloads for Intel...", <Intel />, 190, -0.4, 9],
];
const apps = [
  [<Edge />, "none"], [<Folder />, "multi"], [<Dragon />, "none"], [<MySql />, "none"],
  [<PyCharm />, "none"], [<BlueKey />, "none"], [<Chrome />, "one"],
  [<CocApp />, "one", true], [<Vs />, "multi"], [<Eclipse />, "none"], [<IntelliJ />, "none"],
  [<Office label="W" c={["#41a5ee", "#2b7cd3", "#185abd", "#103f91", "#185abd"]} />, "none"], [<Typora />, "one"],
  [<Office label="X" c={["#33c481", "#107c41", "#107c41", "#185c37", "#107c41"]} />, "none"],
  [<GoLand />, "none"], [<Postman />, "one"], [<Vlc />, "one"],
];

export default function App() {
  return (
    <Screen>
      <Global />
      <TabStrip>
        <Brand><CocCoc /></Brand>
        {tabs.map(([title, icon, w], i) => (
          <Tab key={i} $active={i === 0} $w={w}>
            {icon}
            <TabTitle>{title}</TabTitle>
            <TabClose><CloseX /></TabClose>
            <TabLine $hide={i === 0} />
          </Tab>
        ))}
        <NewTab><Plus /></NewTab>
        <WindowButtons>
          <WinBtn $w={14}><svg width="14" height="11" viewBox="0 0 14 11"><path d="M13 3H2M5 0L2 3l3 3M1 9.500h3M5.500 9.500h3M10 9.500h3" fill="none" stroke="#111" strokeWidth="1.500" /></svg></WinBtn>
          <WinBtn $w={43}><svg width="13" height="2"><rect width="13" height="1.300" fill="#111" /></svg></WinBtn>
          <WinBtn $w={56}><svg width="14" height="14" viewBox="0 0 14 14"><path d="M.7 3.200h9.500v10H.7zM3 3V.7h10.300v10h-3" fill="none" stroke="#111" strokeWidth="1.200" /></svg></WinBtn>
          <WinBtn $w={58}><CloseX s={14} w={1.4} c="#111" /></WinBtn>
        </WindowButtons>
      </TabStrip>
      <Toolbar>
        <NavBtn><BackArrow c="#5f6368" /></NavBtn>
        <NavBtn><BackArrow flip c="#babcbe" /></NavBtn>
        <NavBtn><Reload /></NavBtn>
        <AddressBar>
          <Info />
          <Url><b>localhost</b>:3000/profile/5ead3adf0c3e38232cebd97d</Url>
          <AddressIcons>
            <Star /><Shield /><DownloadBox><Down c="#fff" /></DownloadBox>
          </AddressIcons>
        </AddressBar>
        <Extensions>
          <Ring /><ToolbarLine /><Person /><ToolbarGap /><Down c="#5f6368" bar />
        </Extensions>
      </Toolbar>
      <Bookmarks>
        {marks.map(([t, icon, w, ls, gap]) => (
          <Bookmark key={t} $w={w} $ls={ls} $gap={gap}>{icon}<MarkTitle>{t}</MarkTitle></Bookmark>
        ))}
        <MoreMarks>»</MoreMarks>
      </Bookmarks>
      <Body>
        <Sidebar>
          <SideItem><History /></SideItem>
          <SideItem><Messenger /></SideItem>
          <SideLine $h={1} />
          <SideItem $bg="#dededa"><Plus /></SideItem>
          <SideItem $bg="#fff"><FaYoutube size={19} color="#f00" /></SideItem>
          <SideItem $bg="#fff"><FbIcon /></SideItem>
          <SideLine $h={2} />
          <SideItem><Shopee /></SideItem>
          <SideItem><Chicken /></SideItem>
          <SideItem><Tiki /></SideItem>
          <SideBottom>
            <BellWrap><Bell /><BellDot /></BellWrap>
            <Dots />
          </SideBottom>
        </Sidebar>
        <Page>
          <SiteNav>
            <SiteName>DevConnector</SiteName>
            <SiteLinks><span>Developers</span><span>Posts</span><span>Dashboard</span><span>Logout</span></SiteLinks>
          </SiteNav>
          <Content>
            <BackButton>Back To Profiles</BackButton>
            <ProfileCard>
              <Avatar />
              <Name>def</Name>
              <Role>Developer at FJN</Role>
              <Place>Hanoi</Place>
            </ProfileCard>
          </Content>
        </Page>
        <Scrollbar>
          <ScrollArrow><svg width="9" height="5"><path d="M0 5L4.500 0 9 5z" fill="#a3a3a3" /></svg></ScrollArrow>
          <ScrollThumb />
          <ScrollArrow><svg width="9" height="5"><path d="M0 0l4.500 5L9 0z" fill="#505050" /></svg></ScrollArrow>
        </Scrollbar>
      </Body>
      <Taskbar>
        <TaskCell $w={62}><TaskIcon><FaWindows size={22} color="#fff" /></TaskIcon><Underline $kind="none" /></TaskCell>
        <TaskCell $w={58}><TaskIcon><SearchIcon /></TaskIcon><Underline $kind="none" /></TaskCell>
        <TaskCell $w={64}><TaskIcon><TaskView /></TaskIcon><Underline $kind="none" /></TaskCell>
        {apps.map(([icon, kind, active], i) => (
          <TaskCell key={i} $active={active}>
            <TaskIcon>{icon}</TaskIcon>
            <Underline $kind={kind} $full={active} />
          </TaskCell>
        ))}
        <Tray>
          <TrayIcon $gap={12}><svg width="16" height="10" viewBox="0 0 16 10"><path d="M1 9l7-8 7 8" fill="none" stroke="#fff" strokeWidth="1.400" /></svg></TrayIcon>
          <TrayIcon $gap={11}><svg width="20" height="13" viewBox="0 0 20 13"><path d="M4 5c1-6 10-6 12 0l-6 5z" fill="#9a9a9a" /><path d="M4 12.500c-5 0-5-7 0-7.500 3-1 5 1 6 2 3-3 9-2 10 2 0 2-1 3.500-3 3.500z" fill="#fff" /><path d="M4 5c3-1 5 1 6 2l-8 4c-3-2-2-6 2-6z" fill="#ccc" /></svg></TrayIcon>
          <TrayIcon $gap={13}><svg width="19" height="12" viewBox="0 0 19 12"><path d="M.7.7h16v10.600H.7zM18 4v4" fill="none" stroke="#fff" strokeWidth="1.300" /><path d="M2.200 2.200h3v7.600h-3z" fill="#fff" /></svg></TrayIcon>
          <TrayIcon $gap={11}><svg width="16" height="16" viewBox="0 0 16 16"><path d="M.7 15A14.300 14.300 0 0 1 15 .7M5 15A10 10 0 0 1 15.500 5M9 15a6 6 0 0 1 6-6" fill="none" stroke="#ddd" strokeWidth="1.300" /><circle cx="13.500" cy="13.500" r="1.600" fill="#fff" /></svg></TrayIcon>
          <TrayIcon $gap={11}><svg width="22" height="18" viewBox="0 0 22 18"><path d="M.7 6h3L8 2v14l-4.300-4h-3zM11 6.500c1.200 1.500 1.200 3.500 0 5M14 4c2.500 3 2.500 7 0 10M17 1.500c4 4.500 4 10.500 0 15" fill="none" stroke="#fff" strokeWidth="1.300" /></svg></TrayIcon>
          <Lang>ENG</Lang>
          <Clock>4:15 PM<br />5/5/2020</Clock>
          <Notice>
            <svg width="31" height="32" viewBox="0 0 31 32">
              <path d="M0 1h20v17H7l-3 3v-3H0z" fill="#fff" /><path d="M4 5.500h12M4 9.500h12M4 13.500h8" stroke="#222" strokeWidth="1.300" />
              <circle cx="19.500" cy="20.500" r="10.500" fill="#3a3a3a" stroke="#a0a0a0" /><T x="19.500" y="25" fontSize="13" fill="#fff" fontWeight="600">10</T>
            </svg>
          </Notice>
          <DesktopEdge />
        </Tray>
      </Taskbar>
    </Screen>
  );
}
